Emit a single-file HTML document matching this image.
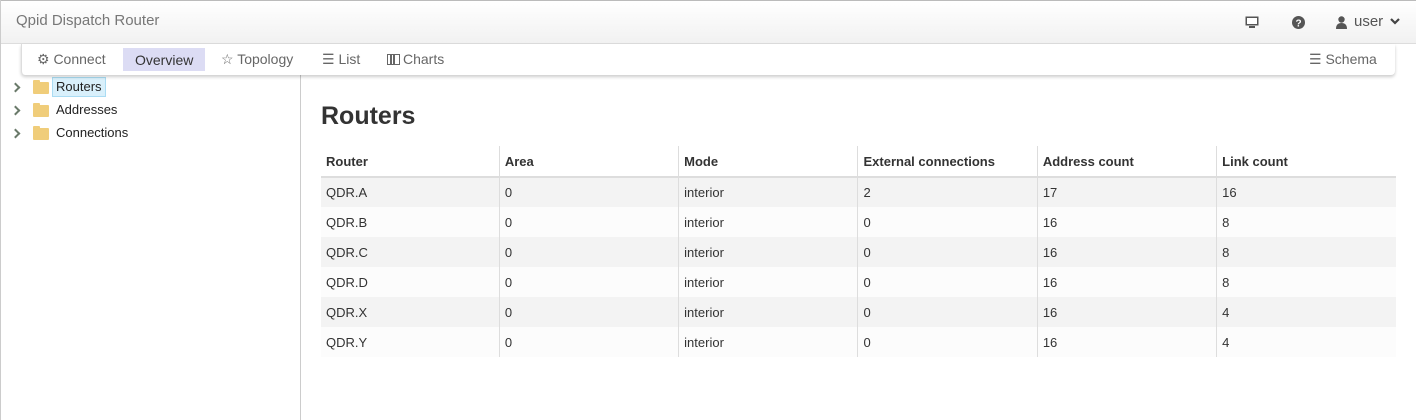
<!DOCTYPE html>
<html><head><style>
*{box-sizing:border-box;margin:0;padding:0}
body{width:1416px;height:420px;background:#fff;font-family:"Liberation Sans",sans-serif;font-size:13px;color:#333;position:relative;overflow:hidden}
.lb{position:absolute;left:0;top:0;width:1px;height:420px;background:#ccc;z-index:5}
.top{position:absolute;left:0;top:0;width:1416px;height:44px;background:linear-gradient(#fff,#f1f1f1);border-top:1px solid #bbb;border-bottom:1px solid #ddd}
.brand{position:absolute;left:16px;top:11px;font-size:15px;color:#777}
.ri{position:absolute;top:13px;color:#555;font-size:14px}
.nav{position:absolute;left:21px;top:44px;width:1374px;height:31px;background:#fff;border-left:1px solid #ddd;box-shadow:0 2px 3px rgba(0,0,0,.2);border-radius:0 0 4px 4px}
.tab{position:absolute;top:3px;height:24px;line-height:24px;font-size:14px;color:#666}
.tab.act{background:#dcdcf4;color:#333;padding:0 12px;top:4px;height:23px}
.left{position:absolute;left:0;top:71px;width:301px;height:349px;border-right:1px solid #ccc;background:#fff}
.tree{position:absolute;left:0;height:20px;line-height:20px;font-size:13px;color:#222}
.chev{position:absolute;left:12px;width:7px;height:7px;border-right:2px solid #6a7a6a;border-top:2px solid #6a7a6a;transform:rotate(45deg)}
.fold{position:absolute;left:33px;width:16px;height:12px;background:#f0cd7a;border-radius:1px}
.fold:before{content:"";position:absolute;left:0;top:-2px;width:7px;height:3px;background:#f0cd7a;border-radius:1px 1px 0 0}
h1{position:absolute;left:321px;top:102px;font-size:25px;font-weight:bold;color:#333}
table{position:absolute;left:321px;top:146px;width:1075px;border-collapse:collapse;font-size:13px}
td,th{height:30px;padding:0 5px;text-align:left;border-left:1px solid #ddd;width:179px}
td:first-child,th:first-child{border-left:none;width:178px}
th{font-weight:bold;border-bottom:2px solid #ddd;height:31px;padding-top:1px}
tr:nth-child(even) td{background:#f3f3f3}
tr:nth-child(odd) td{background:#fcfcfc}
</style></head><body>
<div class="lb"></div>
<div class="top">
<div class="brand">Qpid Dispatch Router</div>
<svg style="position:absolute;left:1245px;top:15px" width="14" height="13"><rect x="0.5" y="0.5" width="13" height="9" fill="#555"/><rect x="2" y="2" width="10" height="6" fill="#fff"/><rect x="4" y="10" width="6" height="2" fill="#555"/></svg>
<svg style="position:absolute;left:1292px;top:15px" width="13" height="13"><circle cx="6.5" cy="6.5" r="6.5" fill="#555"/><text x="6.5" y="10.5" font-size="10" font-weight="bold" fill="#fff" text-anchor="middle" font-family="Liberation Sans">?</text></svg>
<svg style="position:absolute;left:1336px;top:15px" width="11" height="13"><circle cx="5.5" cy="3.5" r="3.2" fill="#555"/><path d="M0 13 Q0 7 5.5 7 Q11 7 11 13Z" fill="#555"/></svg>
<div class="ri" style="left:1354px;font-size:15px;top:12px">user</div>
<svg style="position:absolute;left:1390px;top:17px" width="10" height="8"><path d="M1 1 L5 5 L9 1" stroke="#444" stroke-width="2.2" fill="none"/></svg>
</div>
<div class="left">
<div class="tree" style="top:6px;width:302px"><span class="chev" style="top:7px"></span><span class="fold" style="top:5px"></span><span style="position:absolute;left:52px;top:0;background:#d9f0fb;border:1px solid #aadcf3;padding:0 3px;line-height:18px">Routers</span></div>
<div class="tree" style="top:29px;width:302px"><span class="chev" style="top:7px"></span><span class="fold" style="top:5px"></span><span style="position:absolute;left:56px">Addresses</span></div>
<div class="tree" style="top:52px;width:302px"><span class="chev" style="top:7px"></span><span class="fold" style="top:5px"></span><span style="position:absolute;left:56px">Connections</span></div>
</div>
<div class="nav">
<div class="tab" style="left:15px">⚙ Connect</div>
<div class="tab act" style="left:101px">Overview</div>
<div class="tab" style="left:199px">☆ Topology</div>
<div class="tab" style="left:300px">☰ List</div>
<div class="tab" style="left:365px"><span style="display:inline-block;width:13px;height:11px;border:1px solid #666;vertical-align:-1px;margin-right:3px;background:linear-gradient(90deg,transparent 2px,#666 2px,#666 4px,transparent 4px,transparent 5px,#666 5px,#666 7px,transparent 7px)"></span>Charts</div>
<div class="tab" style="left:1287px">☰ Schema</div>
</div>
<h1>Routers</h1>
<table>
<tr><th>Router</th><th>Area</th><th>Mode</th><th>External connections</th><th>Address count</th><th>Link count</th></tr>
<tr><td>QDR.A</td><td>0</td><td>interior</td><td>2</td><td>17</td><td>16</td></tr>
<tr><td>QDR.B</td><td>0</td><td>interior</td><td>0</td><td>16</td><td>8</td></tr>
<tr><td>QDR.C</td><td>0</td><td>interior</td><td>0</td><td>16</td><td>8</td></tr>
<tr><td>QDR.D</td><td>0</td><td>interior</td><td>0</td><td>16</td><td>8</td></tr>
<tr><td>QDR.X</td><td>0</td><td>interior</td><td>0</td><td>16</td><td>4</td></tr>
<tr><td>QDR.Y</td><td>0</td><td>interior</td><td>0</td><td>16</td><td>4</td></tr>
</table>
</body></html>
